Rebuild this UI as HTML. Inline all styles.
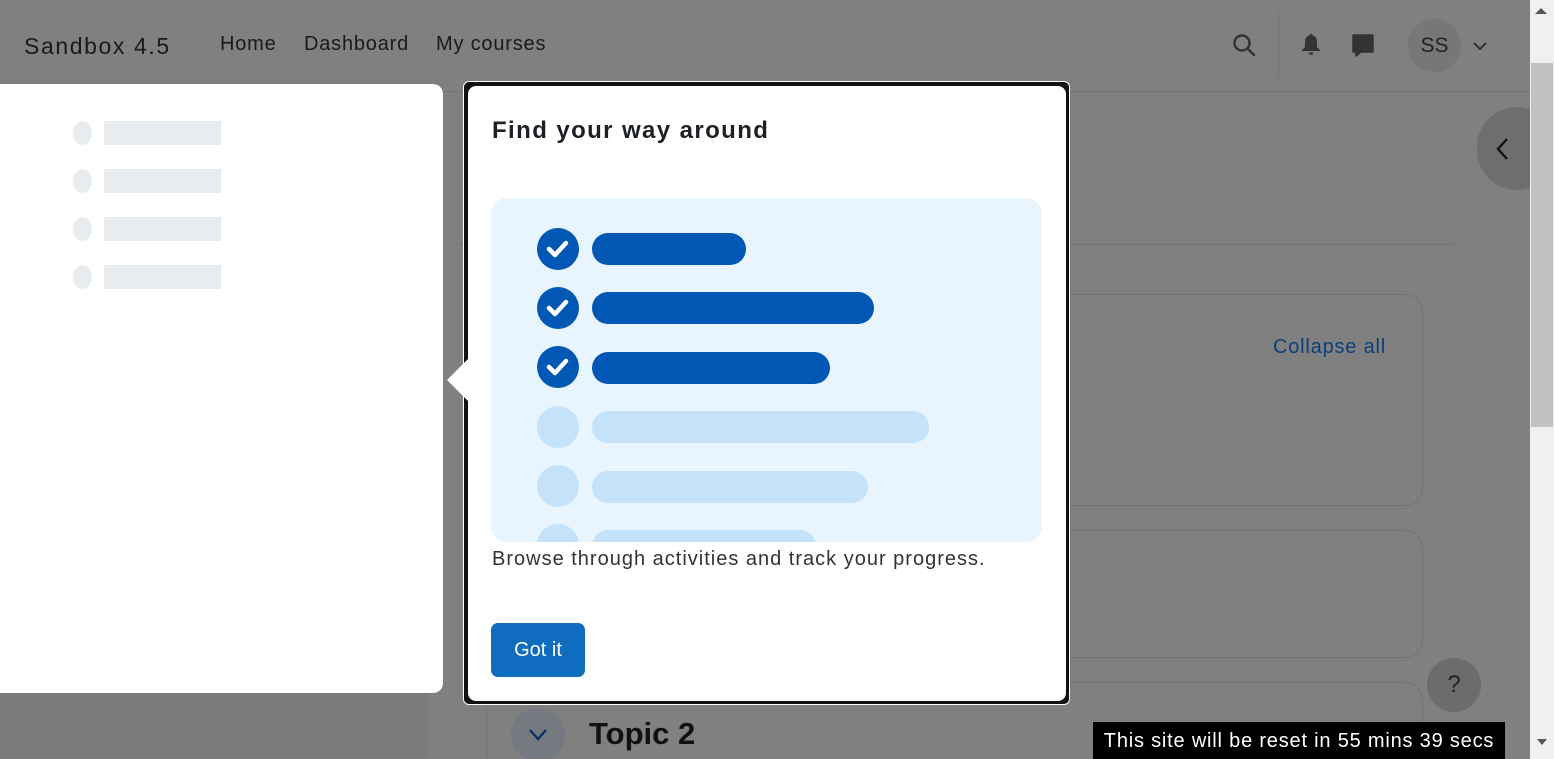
<!DOCTYPE html>
<html style="width:1554px;height:759px;overflow:hidden"><head><style>
*{margin:0;padding:0;box-sizing:border-box}
body{width:1554px;height:759px;overflow:hidden;background:#808080;font-family:"Liberation Sans",sans-serif;position:relative}
.abs{position:absolute}
.nav{font-size:20px;color:#1a1a1a;top:33px;letter-spacing:0.8px}
</style></head><body>
<div class="abs" style="left:0;top:0;width:1530px;height:92px;border-bottom:1px solid #747474"></div>
<div class="abs nav" style="left:24px;font-size:23px;top:33px;letter-spacing:1.6px">Sandbox 4.5</div>
<div class="abs nav" style="left:220px">Home</div>
<div class="abs nav" style="left:304px">Dashboard</div>
<div class="abs nav" style="left:436px">My courses</div>
<svg class="abs" style="left:1232px;top:33px" width="26" height="26" viewBox="0 0 26 26"><circle cx="10" cy="10" r="7.5" fill="none" stroke="#333" stroke-width="2.4"/><path d="M15.5 15.5 L22 22" stroke="#333" stroke-width="2.6" stroke-linecap="round"/></svg>
<div class="abs" style="left:1278px;top:11px;width:1px;height:68px;background:#747474"></div>
<svg class="abs" style="left:1300px;top:33px" width="22" height="24" viewBox="0 0 22 24"><path d="M11 1c1 0 1.5.6 1.5 1.4C16 3.3 17 6 17 9v5l3 3v1H2v-1l3-3V9c0-3 1-5.7 4.5-6.6C9.5 1.6 10 1 11 1z" fill="#333"/><path d="M8.5 19.5h5a2.5 2.5 0 0 1-5 0z" fill="#333"/></svg>
<svg class="abs" style="left:1351px;top:33px" width="24" height="24" viewBox="0 0 24 24"><path d="M2 2h20v17H10l-5 4v-4H2z" fill="#333" stroke="#333" stroke-linejoin="round" stroke-width="1.5"/></svg>
<div class="abs" style="left:1408px;top:19px;width:53px;height:53px;border-radius:50%;background:#777;color:#222;font-size:21px;text-align:center;line-height:53px">SS</div>
<svg class="abs" style="left:1472px;top:40px" width="16" height="12"><path d="M2 3l6 6 6-6" fill="none" stroke="#222" stroke-width="1.8"/></svg>
<div class="abs" style="left:1477px;top:107px;width:80px;height:83px;border-radius:42px;background:#6e6e6e"></div>
<svg class="abs" style="left:1495px;top:136px" width="16" height="26"><path d="M12 3L3 13l9 10" fill="none" stroke="#111" stroke-width="2.4"/></svg>
<div class="abs" style="left:453px;top:244px;width:1002px;height:1px;background:#747474"></div>
<div class="abs" style="left:0;top:692px;width:428px;height:67px;background:#7b7b7b"></div>
<div class="abs" style="left:486px;top:294px;width:937px;height:212px;border:1px solid #747474;border-radius:18px"></div>
<div class="abs" style="left:1273px;top:336px;font-size:20px;color:#0a3f78;letter-spacing:0.8px">Collapse all</div>
<div class="abs" style="left:486px;top:530px;width:937px;height:128px;border:1px solid #747474;border-radius:18px"></div>
<div class="abs" style="left:486px;top:682px;width:937px;height:77px;border:1px solid #747474;border-bottom:none;border-radius:18px 18px 0 0"></div>
<div class="abs" style="left:511px;top:708px;width:54px;height:54px;border-radius:50%;background:#757a80"></div>
<svg class="abs" style="left:528px;top:728px" width="20" height="14"><path d="M2 2l8 9 8-9" fill="none" stroke="#0a3260" stroke-width="2.4"/></svg>
<div class="abs" style="left:589px;top:716px;font-size:31px;font-weight:bold;color:#111">Topic 2</div>
<div class="abs" style="left:1427px;top:658px;width:54px;height:54px;border-radius:50%;background:#6c6c6c;color:#222;font-size:24px;text-align:center;line-height:54px">?</div>
<div class="abs" style="left:1093px;top:722px;width:412px;height:37px;background:#000;color:#fff;font-size:20px;line-height:39px;text-align:center;letter-spacing:0.8px;white-space:nowrap">This site will be reset in 55 mins 39 secs</div>
<div class="abs" style="left:1530px;top:0;width:24px;height:759px;background:#f0f0f0"></div>
<div class="abs" style="left:1531px;top:63px;width:22px;height:364px;background:#c1c1c1"></div>
<div class="abs" style="left:1535px;top:8px;width:0;height:0;border-left:6px solid transparent;border-right:6px solid transparent;border-bottom:6px solid #555"></div>
<div class="abs" style="left:1537px;top:739px;width:0;height:0;border-left:5px solid transparent;border-right:5px solid transparent;border-top:6px solid #555"></div>
<!-- drawer -->
<div class="abs" style="left:0;top:84px;width:443px;height:609px;background:#fff;border-radius:0 10px 10px 0"></div>
<div class="abs" style="left:73px;top:121px;width:19px;height:24px;border-radius:50%;background:#e9ecef"></div><div class="abs" style="left:104px;top:121px;width:117px;height:24px;background:#e9ecef"></div>
<div class="abs" style="left:73px;top:169px;width:19px;height:24px;border-radius:50%;background:#e9ecef"></div><div class="abs" style="left:104px;top:169px;width:117px;height:24px;background:#e9ecef"></div>
<div class="abs" style="left:73px;top:217px;width:19px;height:24px;border-radius:50%;background:#e9ecef"></div><div class="abs" style="left:104px;top:217px;width:117px;height:24px;background:#e9ecef"></div>
<div class="abs" style="left:73px;top:265px;width:19px;height:24px;border-radius:50%;background:#e9ecef"></div><div class="abs" style="left:104px;top:265px;width:117px;height:24px;background:#e9ecef"></div>
<!-- popover -->
<div class="abs" style="left:463px;top:81px;width:607px;height:624px;border:1px solid #fff;border-radius:6px;background:#111"></div>
<div class="abs" style="left:468px;top:86px;width:598px;height:615px;background:#fff;border-radius:8px"></div>
<svg class="abs" style="left:446px;top:358px" width="24" height="44"><path d="M23 0L1 22l22 22z" fill="#fff"/></svg>
<div class="abs" style="left:492px;top:117px;font-size:24px;font-weight:bold;color:#1d2125;letter-spacing:1.4px">Find your way around</div>
<div class="abs" style="left:491px;top:198px;width:551px;height:344px;background:#e8f4fe;border-radius:16px;overflow:hidden">
<svg width="551" height="344">
<g fill="#0057b4"><circle cx="67" cy="51" r="21"/><rect x="101" y="35" width="154" height="32" rx="16"/>
<circle cx="67" cy="110" r="21"/><rect x="101" y="94" width="282" height="32" rx="16"/>
<circle cx="67" cy="169" r="21"/><rect x="101" y="154" width="238" height="32" rx="16"/></g>
<g fill="none" stroke="#fff" stroke-width="4.5" stroke-linecap="round" stroke-linejoin="round"><path d="M58 51l6 6 11-12"/><path d="M58 110l6 6 11-12"/><path d="M58 169l6 6 11-12"/></g>
<g fill="#c4e3fb"><circle cx="67" cy="229" r="21"/><rect x="101" y="213" width="337" height="32" rx="16"/>
<circle cx="67" cy="288" r="21"/><rect x="101" y="273" width="276" height="32" rx="16"/>
<circle cx="67" cy="347" r="21"/><rect x="101" y="332" width="224" height="32" rx="16"/></g>
</svg></div>
<div class="abs" style="left:492px;top:548px;font-size:20px;color:#333;letter-spacing:1px;white-space:nowrap">Browse through activities and track your progress.</div>
<div class="abs" style="left:491px;top:623px;width:94px;height:54px;background:#0f6cbf;border-radius:7px;color:#fff;font-size:20px;text-align:center;line-height:54px">Got it</div>
</body></html>
